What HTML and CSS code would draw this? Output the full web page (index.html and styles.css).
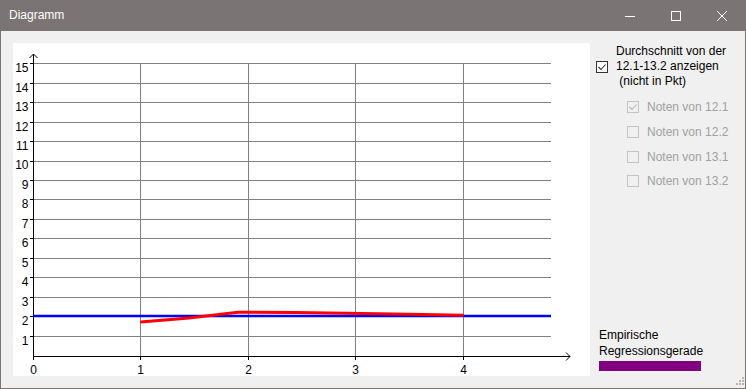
FILE: index.html
```html
<!DOCTYPE html>
<html lang="de">
<head>
<meta charset="utf-8">
<title>Diagramm</title>
<link rel="stylesheet" href="styles.css">
</head>
<body>
<div class="window">
  <div class="titlebar">
    <span class="title">Diagramm</span>
    <div class="controls">
      <span class="ctl"><svg width="12" height="12" viewBox="0 0 12 12"><path d="M1 6.5H11" stroke="#fff" stroke-width="1"/></svg></span>
      <span class="ctl"><svg width="12" height="12" viewBox="0 0 12 12"><rect x="1.5" y="1.5" width="9" height="9" fill="none" stroke="#fff" stroke-width="1"/></svg></span>
      <span class="ctl"><svg width="12" height="12" viewBox="0 0 12 12"><path d="M1 1L11 11M11 1L1 11" stroke="#fff" stroke-width="1"/></svg></span>
    </div>
  </div>
  <div class="client">
    <div class="chart-wrap">
      <div class="chart">
        <svg width="577" height="333" viewBox="0 0 577 333" class="plot">
          <g stroke="#808080" stroke-width="1" fill="none">
            <path d="M20 20.5H538M20 40.5H538M20 59.5H538M20 79.5H538M20 98.5H538M20 118.5H538M20 137.5H538M20 156.5H538M20 176.5H538M20 195.5H538M20 215.5H538M20 234.5H538M20 254.5H538M20 273.5H538M20 293.5H538"/>
            <path d="M127.5 20.5V313.5M235.5 20.5V313.5M342.5 20.5V313.5M450.5 20.5V313.5"/>
          </g>
          <g stroke="#000" stroke-width="1" fill="none">
            <path d="M20.5 11V317M20 313.5H557"/>
            <path d="M16.5 15L20.5 11L24.5 15"/>
            <path d="M553 309.5L557 313.5L553 317.5"/>
            <path d="M17 20.5H20M17 40.5H20M17 59.5H20M17 79.5H20M17 98.5H20M17 118.5H20M17 137.5H20M17 156.5H20M17 176.5H20M17 195.5H20M17 215.5H20M17 234.5H20M17 254.5H20M17 273.5H20M17 293.5H20"/>
            <path d="M127.5 313.5V317M235.5 313.5V317M342.5 313.5V317M450.5 313.5V317"/>
          </g>
          <path d="M20 273H538" stroke="#0000ff" stroke-width="2.5" fill="none"/>
          <polyline points="127.5,279 176,275 225,269.3 283,269.5 333,270.3 396,271.2 450.5,272.2" stroke="#ff0000" stroke-width="3" fill="none"/>
          <g class="lbl" text-anchor="end">
            <text x="15.5" y="28.5">15</text>
            <text x="15.5" y="48.5">14</text>
            <text x="15.5" y="67.5">13</text>
            <text x="15.5" y="87.5">12</text>
            <text x="15.5" y="106.5">11</text>
            <text x="15.5" y="126">10</text>
            <text x="15.5" y="145.5">9</text>
            <text x="15.5" y="164.5">8</text>
            <text x="15.5" y="184.5">7</text>
            <text x="15.5" y="203.5">6</text>
            <text x="15.5" y="223.5">5</text>
            <text x="15.5" y="242.5">4</text>
            <text x="15.5" y="262.5">3</text>
            <text x="15.5" y="281.5">2</text>
            <text x="15.5" y="301.5">1</text>
          </g>
          <g class="lbl" text-anchor="middle">
            <text x="20.5" y="330.5">0</text>
            <text x="127.5" y="330.5">1</text>
            <text x="235.5" y="330.5">2</text>
            <text x="342.5" y="330.5">3</text>
            <text x="450.5" y="330.5">4</text>
          </g>
        </svg>
      </div>
    </div>
    <div class="side">
      <div class="main-opt">
        <span class="box"><svg width="10" height="10" viewBox="0 0 10 10"><path d="M1.5 5L4 7.5L8.5 2.5" stroke="#333" stroke-width="1.1" fill="none"/></svg></span>
        <span class="main-text">Durchschnitt von der<br>12.1-13.2 anzeigen<br>&nbsp;(nicht in Pkt)</span>
      </div>
      <div class="sub-opts">
        <div class="sub"><span class="box dis"><svg width="10" height="10" viewBox="0 0 10 10"><path d="M1.5 5L4 7.5L8.5 2.5" stroke="#b8b8b8" stroke-width="1.1" fill="none"/></svg></span><span>Noten von 12.1</span></div>
        <div class="sub"><span class="box dis"></span><span>Noten von 12.2</span></div>
        <div class="sub"><span class="box dis"></span><span>Noten von 13.1</span></div>
        <div class="sub"><span class="box dis"></span><span>Noten von 13.2</span></div>
      </div>
      <div class="legend">
        <div class="legend-text">Empirische<br>Regressionsgerade</div>
        <div class="legend-bar"></div>
      </div>
    </div>
    <svg class="grip" width="12" height="12" viewBox="0 0 12 12">
      <g fill="#b4b4b4">
        <rect x="9" y="1" width="2" height="2"/>
        <rect x="6" y="4" width="2" height="2"/><rect x="9" y="4" width="2" height="2"/>
        <rect x="3" y="7" width="2" height="2"/><rect x="6" y="7" width="2" height="2"/><rect x="9" y="7" width="2" height="2"/>
      </g>
    </svg>
  </div>
</div>
</body>
</html>
```

FILE: styles.css
```css
* { box-sizing: border-box; }
html, body {
  margin: 0;
  padding: 0;
  background: #f0f0f0;
}
body {
  font-family: "Liberation Sans", Arial, sans-serif;
  font-size: 12px;
  color: #000;
}
.window {
  width: 746px;
  height: 389px;
  display: flex;
  flex-direction: column;
}
.titlebar {
  height: 31px;
  background: #7a7574;
  display: flex;
  align-items: center;
  padding-right: 1px;
}
.title {
  color: #fff;
  padding-left: 9px;
  font-size: 12px;
  flex: 1;
  padding-bottom: 1px;
}
.controls {
  display: flex;
  height: 31px;
}
.ctl {
  width: 46px;
  height: 31px;
  display: flex;
  align-items: center;
  justify-content: center;
}
.ctl svg { display: block; }
.client {
  position: relative;
  flex: 1;
  display: flex;
  border: 1px solid #7a7574;
  border-top: none;
  background: #f0f0f0;
}
.chart-wrap {
  padding: 12px 0 12px 12px;
}
.chart {
  width: 577px;
  height: 333px;
  background: #fff;
}
.plot { display: block; }
.lbl {
  font-family: "Liberation Sans", Arial, sans-serif;
  font-size: 12px;
  fill: #000;
}
.side {
  flex: 1;
  display: flex;
  flex-direction: column;
  padding: 13px 0 17px 6px;
}
.main-opt {
  display: flex;
  align-items: center;
  gap: 8px;
}
.main-text {
  line-height: 15px;
}
.box {
  width: 12px;
  height: 12px;
  border: 1px solid #333;
  background: #fff;
  display: flex;
  align-items: center;
  justify-content: center;
  flex: none;
}
.box svg { display: block; }
.box.dis {
  border-color: #c4c4c4;
  background: #f0f0f0;
}
.sub-opts {
  margin-top: 6px;
  margin-left: 31px;
}
.sub {
  height: 24.7px;
  display: flex;
  align-items: center;
  gap: 8px;
  color: #a0a0a0;
}
.legend {
  margin-top: auto;
  padding-left: 3px;
}
.legend-text {
  line-height: 15.5px;
}
.legend-bar {
  margin-top: 2px;
  width: 102px;
  height: 10px;
  background: #800080;
}
.grip {
  position: absolute;
  right: 0;
  bottom: 0;
}
```
